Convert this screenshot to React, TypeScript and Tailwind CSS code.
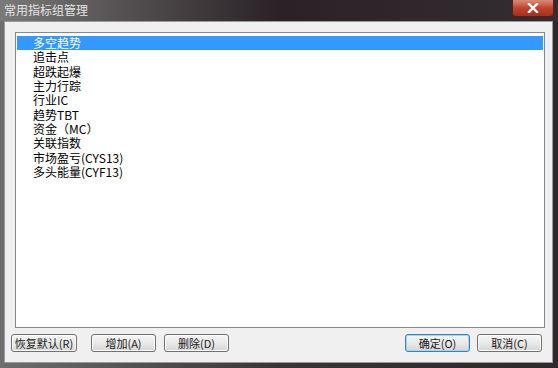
const items = [
  "多空趋势",
  "追击点",
  "超跌起爆",
  "主力行踪",
  "行业IC",
  "趋势TBT",
  "资金（MC）",
  "关联指数",
  "市场盈亏(CYS13)",
  "多头能量(CYF13)",
]

function Btn({ label, primary, w }: { label: string; primary?: boolean; w: string }) {
  return (
    <div
      className={`${w} h-[18px] flex items-center justify-center rounded-[3px] border text-[11px] text-[#1a1a1a] bg-gradient-to-b from-[#f6f6f6] via-[#e9e9e9] to-[#d6d6d6] ${
        primary ? "border-[#3c7fb1] shadow-[inset_0_0_0_1px_#9fd8f4]" : "border-[#707070] shadow-[inset_0_0_0_1px_#fcfcfc]"
      }`}
    >
      {label}
    </div>
  )
}

export default function App() {
  return (
    <div
      className="w-[558px] h-[368px] flex flex-col bg-gradient-to-r from-[#6e6e6e] via-[#3a3437] to-[#2e282c] overflow-hidden"
      style={{ fontFamily: '"Noto Sans CJK SC", "Liberation Sans", sans-serif' }}
    >
      {/* title bar */}
      <div className="h-[21px] flex items-start relative bg-gradient-to-r from-[#7a7a7a] via-[#2a2226] to-[#332c30]">
        <span className="pl-[4px] pt-[3px] text-[12px] leading-[14px] text-[#e4e4e4]">常用指标组管理</span>
        <div className="absolute left-[512px] top-0 w-[42px] h-[17px] rounded-b-[4px] border border-t-0 border-[#5a2018] bg-gradient-to-b from-[#d98a78] via-[#c0432e] to-[#a5301c] flex items-center justify-center">
          <svg width="12" height="10" viewBox="0 0 12 10">
            <path d="M2 1 L10 9 M10 1 L2 9" stroke="#ffffff" strokeWidth="2.4" strokeLinecap="square" />
          </svg>
        </div>
      </div>

      {/* client panel */}
      <div className="flex-1 ml-[4px] mr-[5px] mb-[5px] bg-[#f0f0f0] border border-[#9a9a9a] flex flex-col">
        <div className="mt-[10px] ml-[10px] mr-[7px] h-[296px] border border-[#828790] bg-white p-[1px]">
          <div className="pt-[2px]">
            {items.map((t, i) => (
              <div
                key={t}
                className={`h-[14.33px] flex items-center pl-[16px] text-[12px] leading-[14px] ${
                  i === 0 ? "bg-[#3399ff] text-white" : "text-black"
                }`}
              >
                {t}
              </div>
            ))}
          </div>
        </div>

        <div className="mt-[6px] pl-[6px] pr-[10px] flex items-center">
          <Btn label="恢复默认(R)" w="w-[66px]" />
          <div className="w-[14px]" />
          <Btn label="增加(A)" w="w-[65px]" />
          <div className="w-[8px]" />
          <Btn label="删除(D)" w="w-[65px]" />
          <div className="flex-1" />
          <Btn label="确定(O)" w="w-[65px]" primary />
          <div className="w-[7px]" />
          <Btn label="取消(C)" w="w-[65px]" />
        </div>
      </div>
    </div>
  )
}
